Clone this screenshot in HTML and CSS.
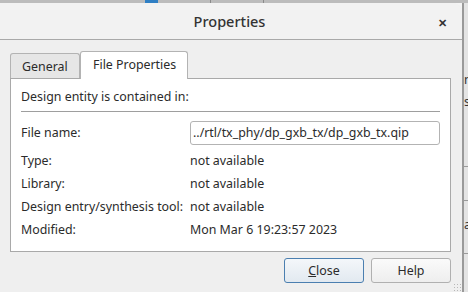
FILE: index.html
```html
<!DOCTYPE html>
<html>
  <head>
    <meta charset="utf-8">
    <title>Properties</title>
    <link rel="stylesheet" href="styles.css">
  </head>
  <body>
    <div class="strip">
      <span class="strip-mark"></span>
      <span class="strip-sep"></span>
      <span class="strip-sep"></span>
    </div>
    <div class="screen">
      <div class="dialog">
        <div class="titlebar">
          <span class="title">Properties</span>
          <span class="close-x">&#x2715;</span>
        </div>
        <div class="dialog-body">
          <div class="tabs">
            <span class="tab">General</span>
            <span class="tab tab-active">File Properties</span>
          </div>
          <div class="panel">
            <div class="panel-head">Design entity is contained in:</div>
            <div class="rule"></div>
            <div class="props">
              <span class="prop-label">File name:</span>
              <span class="prop-input">../rtl/tx_phy/dp_gxb_tx/dp_gxb_tx.qip</span>
              <span class="prop-label">Type:</span>
              <span class="prop-value">not available</span>
              <span class="prop-label">Library:</span>
              <span class="prop-value">not available</span>
              <span class="prop-label">Design entry/synthesis tool:</span>
              <span class="prop-value">not available</span>
              <span class="prop-label">Modified:</span>
              <span class="prop-value">Mon Mar 6 19:23:57 2023</span>
            </div>
          </div>
          <div class="buttons">
            <button class="btn btn-default"><u>C</u>lose</button>
            <button class="btn">Help</button>
          </div>
          <span class="grip"></span>
        </div>
      </div>
      <div class="behind">
        <span class="behind-text behind-n">n</span>
        <span class="behind-text behind-s">s</span>
        <span class="behind-line behind-l1"></span>
        <span class="behind-line behind-l2"></span>
        <span class="behind-text behind-a">a</span>
        <span class="behind-line behind-l3"></span>
      </div>
    </div>
  </body>
</html>
```

FILE: styles.css
```css
* {
  box-sizing: border-box;
  margin: 0;
  padding: 0;
}

body {
  background: #f4f4f4;
  color: #2b2b2b;
  font-family: "Noto Sans", "Open Sans", sans-serif;
  font-size: 12.4px;
  height: 292px;
  overflow: hidden;
  width: 468px;
}

.strip {
  background: #bcbcbc;
  display: flex;
  height: 3px;
}

.strip-mark {
  background: #2f7fc4;
  margin-left: 145px;
  width: 13px;
}

.strip-sep {
  background: #8a8a8a;
  margin-left: 52px;
  width: 1px;
}

.screen {
  display: flex;
  height: 289px;
}

.dialog {
  background: #efefef;
  border-top-right-radius: 9px;
  display: flex;
  flex-direction: column;
  width: 462px;
}

.titlebar {
  align-items: center;
  background: #f2f2f2;
  border-bottom: 1px solid #a9a9a9;
  border-top-right-radius: 9px;
  display: flex;
  height: 37px;
  justify-content: center;
  position: relative;
}

.title {
  color: #333;
  font-size: 14.5px;
  font-weight: 500;
  margin-left: -3px;
}

.close-x {
  color: #333;
  font-size: 11px;
  font-weight: bold;
  position: absolute;
  right: 15px;
  top: 12px;
}

.dialog-body {
  display: flex;
  flex: 1;
  flex-direction: column;
  padding: 11px 11px 0 10px;
  position: relative;
}

.tabs {
  align-items: flex-end;
  display: flex;
  height: 27px;
}

.tab {
  background: #e6e6e6;
  border: 1px solid #b3b3b3;
  border-bottom: none;
  border-radius: 3px 3px 0 0;
  height: 25px;
  line-height: 25px;
  padding-left: 11px;
  white-space: nowrap;
  width: 70px;
}

.tab-active {
  background: #fff;
  height: 28px;
  line-height: 26px;
  margin-bottom: -1px;
  padding-left: 12px;
  position: relative;
  width: 108px;
  z-index: 1;
}

.panel {
  background: #fff;
  border: 1px solid #a9a9a9;
  height: 174px;
  padding: 8px 10px 0 10px;
}

.panel-head {
  line-height: 19px;
  white-space: nowrap;
}

.rule {
  border-top: 1px solid #9e9e9e;
  margin-top: 5px;
}

.props {
  display: grid;
  grid-auto-rows: 23px;
  grid-template-columns: 169px 1fr;
  grid-template-rows: 28px;
  line-height: 23px;
  margin-top: 9px;
  white-space: nowrap;
}

.prop-input {
  border: 1px solid #b3b3b3;
  border-radius: 3px;
  height: 24px;
  line-height: 21px;
  margin-bottom: 4px;
  padding-left: 2px;
}

.buttons {
  display: flex;
  gap: 7px;
  justify-content: flex-end;
  margin-top: 6px;
}

.btn {
  background: linear-gradient(#fafafa, #eeeeee);
  border: 1px solid #b0b0b0;
  border-radius: 3px;
  color: #2b2b2b;
  font-family: inherit;
  font-size: 12.4px;
  height: 25px;
  width: 80px;
}

.btn-default {
  background: linear-gradient(#f4f7fa, #e2e9f0);
  border-color: #4b7fb0;
}

.grip {
  background-image: radial-gradient(#b8b8b8 0.8px, transparent 1px);
  background-size: 3px 3px;
  bottom: 0;
  height: 9px;
  position: absolute;
  right: 0;
  width: 9px;
}

.behind {
  background: #e4e4e4;
  border-left: 2px solid #9a9a9a;
  flex: 1;
  overflow: hidden;
  position: relative;
}

.behind-text {
  color: #333;
  left: 0;
  line-height: 14px;
  position: absolute;
}

.behind-n {
  top: 70px;
}

.behind-s {
  top: 92px;
}

.behind-a {
  top: 215px;
}

.behind-line {
  border-top: 1px solid #9a9a9a;
  left: 0;
  position: absolute;
  width: 100%;
}

.behind-l1 {
  top: 163px;
}

.behind-l2 {
  top: 197px;
}

.behind-l3 {
  top: 250px;
}
```
